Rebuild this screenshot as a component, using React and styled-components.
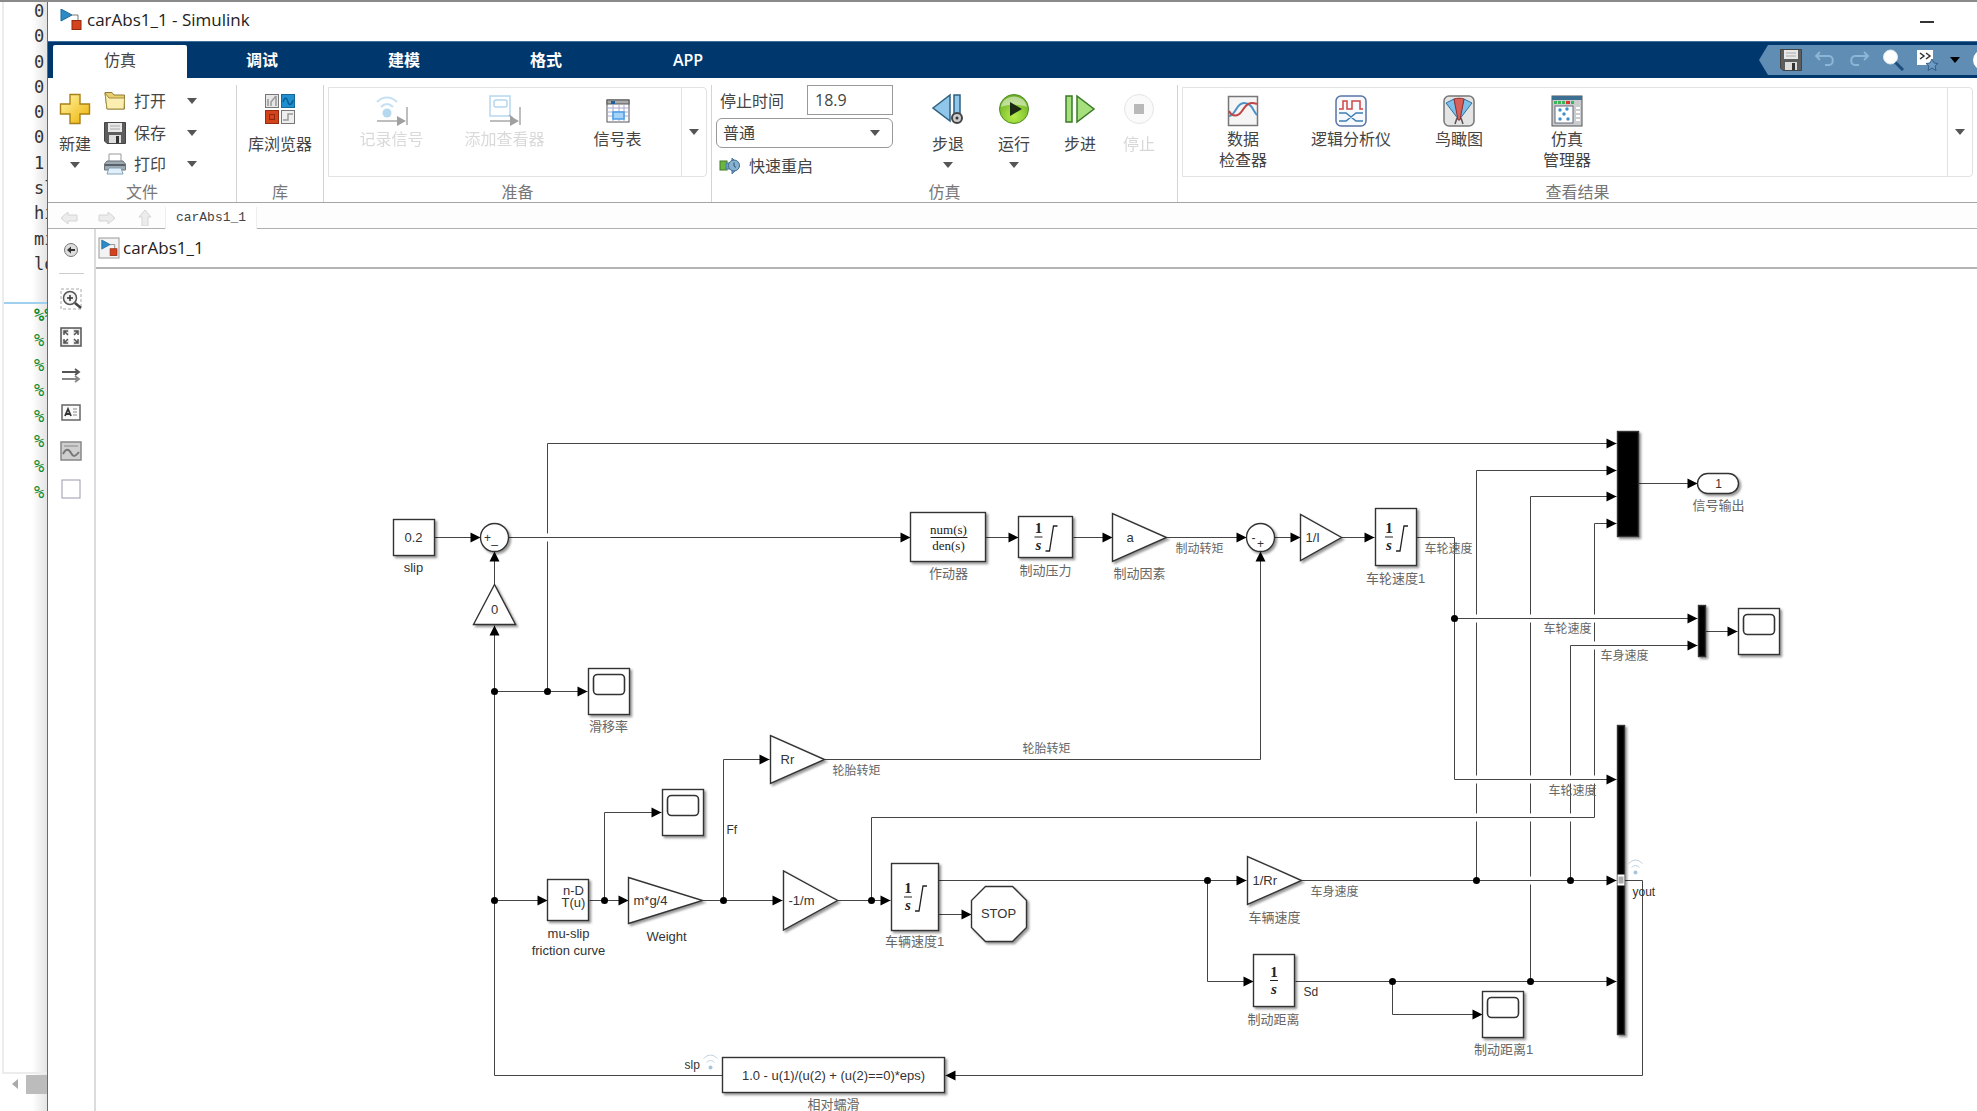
import React from 'react';
import styled, { createGlobalStyle } from 'styled-components';

const GlobalStyle = createGlobalStyle`
    * {
        box-sizing: border-box;
    }

    body {
        margin: 0;
        background: #fff;
        color: #444;
        font-family: "Open Sans", "Noto Sans", "Noto Sans CJK SC", sans-serif;
        font-size: 16px;
        overflow: hidden;
    }

    button, input, select {
        font: inherit;
        color: inherit;
    }
`;

/* ---------- shell ---------- */

const Screen = styled.div`
    display: grid;
    grid-template-columns: 47px minmax(0, 1fr);
    height: 100vh;
    border-top: 2px solid #8a8a8a;
    overflow: hidden;
`;

const Editor = styled.aside`
    display: flex;
    flex-direction: column;
    overflow: hidden;
    background: linear-gradient(to right, #fff 32px, #e4e4e4);
`;

const Page = styled.div`
    flex: 1;
    min-height: 0;
    margin-left: 2px;
    border-left: 2px solid #ececec;
    border-bottom: 2px solid #ececec;
`;

const Code = styled.div`
    display: grid;
    grid-auto-rows: 1fr;
    height: 506px;
    margin-top: -2px;
    font-family: "DejaVu Sans Mono", monospace;
    font-size: 17px;
    line-height: 22px;
`;

const CodeLine = styled.div`
    padding-left: 30px;
    white-space: pre;
    color: ${props => (props.$comment ? '#128a2e' : '#333')};
    font-weight: ${props => (props.$bold ? 700 : 400)};
    border-bottom: ${props => (props.$ruled ? '2px solid #9fd0f0' : 'none')};
`;

const ScrollRow = styled.div`
    display: flex;
    align-items: center;
    height: 20px;
    padding-left: 9px;
    gap: 7px;
`;

const Thumb = styled.div`
    flex: 1;
    height: 19px;
    background: #bcbcbc;
`;

const EditorFoot = styled.div`
    height: 17px;
`;

const Window = styled.main`
    display: flex;
    flex-direction: column;
    min-width: 0;
    background: #fff;
    border-left: 1px solid #6a6a6a;
`;

const TitleBar = styled.header`
    display: flex;
    align-items: center;
    height: 39px;
    flex: none;
    padding: 0 43px 4px 12px;
    gap: 5px;
`;

const Title = styled.h1`
    flex: 1;
    margin: 0;
    font-size: 17px;
    font-weight: 400;
    line-height: 24px;
    color: #222;
`;

const PlainButton = styled.button`
    display: flex;
    align-items: center;
    justify-content: center;
    padding: 0;
    border: 0;
    background: none;
    cursor: pointer;

    &:disabled {
        cursor: default;
    }
`;

/* ---------- ribbon ---------- */

const TabBar = styled.nav`
    display: flex;
    flex: none;
    height: 37px;
    padding: 3px 0 0 5px;
    gap: 8px;
    background: #00386e;
    border-top: 1px solid #3f6f9c;
`;

const Tab = styled.button`
    width: 134px;
    padding: 0 0 4px;
    border: 0;
    border-radius: 2px 2px 0 0;
    font-size: 16px;
    line-height: 24px;
    color: ${props => (props.$active ? '#444' : '#fff')};
    background: ${props => (props.$active ? '#fff' : 'transparent')};
    font-weight: ${props => (props.$active ? 400 : 600)};
`;

const QuickAccess = styled.div`
    display: flex;
    align-items: center;
    width: 218px;
    height: 30px;
    margin-left: auto;
    padding-left: 21px;
    gap: 12px;
    background: #5f8db4;
    overflow: hidden;
    clip-path: polygon(9px 0, 100% 0, 100% 100%, 9px 100%, 0 50%);

    button {
        flex: none;
    }
`;

const ToolStrip = styled.div`
    display: flex;
    flex: none;
    height: 125px;
    padding-top: 7px;
    border-bottom: 1px solid #a4a4a4;
`;

const Section = styled.section`
    display: flex;
    flex-direction: column;
    flex: ${props => (props.$width ? `0 0 ${props.$width}px` : '1')};
    min-width: 0;
    border-right: ${props => (props.$width ? '1px solid #d4d4d4' : 'none')};
`;

const SectionBody = styled.div`
    display: flex;
    height: 95px;
    padding: 0 4px;
    justify-content: ${props => (props.$center ? 'center' : 'flex-start')};
`;

const SectionName = styled.div`
    height: 22px;
    line-height: 24px;
    text-align: center;
    color: #777;
`;

const BigButton = styled.button`
    display: flex;
    flex-direction: column;
    align-items: center;
    width: ${props => props.$width}px;
    padding: 8px 0 0;
    border: 0;
    background: none;
    line-height: 24px;
    white-space: nowrap;
    opacity: ${props => (props.disabled ? 0.45 : 1)};
    color: ${props => (props.disabled ? '#a8a8a8' : '#444')};

    > span {
        margin: 7px 0 6px;
    }
`;

const FileRows = styled.div`
    display: flex;
    flex-direction: column;
    padding-left: 6px;
`;

const FileRow = styled.div`
    display: flex;
    align-items: center;
    height: 32px;
    gap: 21px;
`;

const IconTextButton = styled(PlainButton)`
    gap: 8px;
    line-height: 24px;
`;

const Gallery = styled.div`
    display: flex;
    flex: 1;
    height: 90px;
    margin-top: 2px;
    border: 1px solid #e2e2e2;
    border-radius: 0 4px 4px 0;
`;

const GalleryItems = styled.div`
    display: flex;
    flex: 1;
    padding-left: 6px;
`;

const GalleryItem = styled.button`
    display: flex;
    flex-direction: column;
    align-items: center;
    width: ${props => props.$width}px;
    padding: 7px 0 0;
    gap: 2px;
    border: 0;
    background: none;
    line-height: 21px;
    white-space: pre;
    opacity: ${props => (props.disabled ? 0.5 : 1)};
    color: ${props => (props.disabled ? '#b4b4b4' : '#444')};
`;

const GalleryMore = styled(PlainButton)`
    width: 25px;
    border-left: 1px solid #e2e2e2;
`;

const SimSettings = styled.div`
    display: flex;
    flex-direction: column;
    width: 177px;
    margin-right: 22px;
    gap: 3px;
`;

const StopTime = styled.label`
    display: flex;
    align-items: center;
    justify-content: space-between;
    height: 30px;
    padding-left: 4px;
`;

const TimeInput = styled.input`
    width: 86px;
    height: 30px;
    padding: 0 7px;
    border: 1px solid #999;
    background: #fff;
`;

const ModeBox = styled.div`
    position: relative;
    height: 30px;

    > svg {
        position: absolute;
        right: 13px;
        top: 12px;
        pointer-events: none;
    }
`;

const ModeSelect = styled.select`
    width: 100%;
    height: 30px;
    padding: 0 6px;
    appearance: none;
    border: 1px solid #999;
    border-radius: 6px;
    background: #fff;
`;

const FastRestart = styled(IconTextButton)`
    height: 30px;
    padding-left: 3px;
    justify-content: flex-start;
`;

/* ---------- explorer bar, palette, canvas ---------- */

const NavBar = styled.div`
    display: flex;
    flex: none;
    align-items: center;
    height: 26px;
    padding: 4px 0 0 12px;
    gap: 20px;
    background: #fdfdfd;
    border-bottom: 1px solid #b0b0b0;
`;

const NavTab = styled.button`
    height: 22px;
    margin-left: -9px;
    width: 92px;
    padding: 0;
    border: 0;
    border-left: 1px solid #eee;
    border-right: 1px solid #eee;
    background: #fff;
    font-family: "Liberation Mono", monospace;
    font-size: 13px;
`;

const Workspace = styled.div`
    display: flex;
    flex: 1;
    min-height: 0;
`;

const Palette = styled.div`
    display: flex;
    flex-direction: column;
    align-items: center;
    flex: none;
    width: 48px;
    padding-top: 12px;
    border-right: 2px solid #dcdcdc;
`;

const PaletteRule = styled.hr`
    width: 25px;
    height: 1px;
    margin: 14px 0 6px;
    border: 0;
    background: #ccc;
`;

const PaletteButton = styled(PlainButton)`
    width: 26px;
    height: ${props => (props.$small ? 18 : 38)}px;
`;

const Model = styled.div`
    display: flex;
    flex-direction: column;
    flex: 1;
    min-width: 0;
`;

const Breadcrumb = styled.div`
    display: flex;
    flex: none;
    align-items: center;
    height: 40px;
    padding-left: 2px;
    gap: 3px;
    border-bottom: 2px solid #b4b4b4;
    font-size: 17px;
    line-height: 24px;
    color: #222;
`;

const Canvas = styled.div`
    flex: 1;
    min-height: 0;
    overflow: hidden;
`;

const Diagram = styled.svg`
    display: block;
    width: 100%;
    height: 100%;
`;

const Line = styled.polyline`
    fill: none;
    stroke: #444;
    stroke-width: 1;
`;

const Shape = styled.g`
    fill: #fff;
    stroke: #333;
    stroke-width: 1.4;
    filter: drop-shadow(2px 2px 1px rgba(0, 0, 0, 0.4));
`;

const BlockText = styled.text`
    font-family: "Liberation Sans", "Noto Sans CJK SC", sans-serif;
    font-size: ${props => props.$size || 13}px;
    fill: ${props => props.$tone || '#333'};
    text-anchor: ${props => props.$anchor || 'middle'};
`;

const MathText = styled.text`
    font-family: "Liberation Serif", serif;
    font-size: ${props => props.$size || 15}px;
    font-style: ${props => (props.$italic ? 'italic' : 'normal')};
    font-weight: ${props => (props.$bold ? 700 : 400)};
    fill: #222;
    text-anchor: middle;
`;

/* ---------- icons ---------- */

const Caret = ({ color = '#555' }) => (
    <svg width="10" height="6" viewBox="0 0 10 6"><path d="M0 0h10L5 6z" fill={color} /></svg>
);

const ModelIcon = ({ framed }) => (
    <svg width="22" height="22" viewBox="0 0 22 22">
        {framed && <rect x="1" y="1" width="20" height="20" fill="#f3f3f3" stroke="#999" />}
        <g transform={framed ? 'translate(3 3) scale(.76)' : undefined}>
            <path d="M12 6h6v7" fill="none" stroke="#777" />
            <path d="M1 0v12l11-6z" fill="#2c8bc4" stroke="#1c6c9f" />
            <rect x="12" y="11.500" width="9" height="9" fill="#d5431d" stroke="#8d2a10" />
        </g>
    </svg>
);

const PlusIcon = () => (
    <svg width="32" height="32" viewBox="0 0 32 32">
        <defs>
            <linearGradient id="gold" x1="0" y1="0" x2="1" y2="1">
                <stop offset="0" stopColor="#fff6a8" />
                <stop offset="1" stopColor="#eeb000" />
            </linearGradient>
        </defs>
        <path d="M11 1.500h10v9.500h9.500v10H21v9.500H11V21H1.500V11H11z" fill="url(#gold)" stroke="#a98116" strokeWidth="1.400" />
    </svg>
);

const FolderIcon = () => (
    <svg width="22" height="22" viewBox="0 0 22 22">
        <path d="M1 2.500h7l2 2.500h10.500v14H3z" fill="#e9cf6b" stroke="#8e7a35" />
        <path d="M1 3l4 5h15.500l-.5 11H3z" fill="#fbeeb0" stroke="#a28d46" />
    </svg>
);

const DiskIcon = () => (
    <svg width="22" height="22" viewBox="0 0 22 22">
        <path d="M.5.500h21v21H3l-2.500-2.500z" fill="#5d5d5d" stroke="#444" />
        <rect x="4" y="1" width="14" height="9" fill="#e8e8e8" />
        <path d="M6 4h10M6 7h10" stroke="#aaa" />
        <rect x="5" y="13" width="12" height="8" fill="#ddd" />
        <rect x="12" y="14" width="3" height="7" fill="#333" />
    </svg>
);

const PrinterIcon = () => (
    <svg width="22" height="22" viewBox="0 0 22 22">
        <path d="M5 1h12v8H5z" fill="#fff" stroke="#999" />
        <path d="M3 8h16l2.500 3v6H.5v-6z" fill="#9fa9b1" stroke="#6c757c" />
        <path d="M1 12h20" stroke="#59626a" strokeWidth="2" />
        <path d="M5 15h12l2 6H3z" fill="#dff0fa" stroke="#84a2b5" />
    </svg>
);

const LibraryIcon = () => (
    <svg width="32" height="32" viewBox="0 0 32 32">
        <rect x="1.500" y="1.500" width="13" height="13" fill="#e6e6e6" stroke="#777" />
        <path d="M4 13V6M7 13V9l5-6M12 3v10" fill="none" stroke="#999" strokeWidth="1.500" />
        <rect x="17.500" y="1.500" width="13" height="13" fill="#1f8fce" stroke="#14699a" />
        <path d="M19 9c2-6 4-4 5 0s4 3 5-2" fill="none" stroke="#0b5f97" strokeWidth="1.500" />
        <rect x="1.500" y="17.500" width="13" height="13" fill="#d5431d" stroke="#962c10" />
        <rect x="5.500" y="21.500" width="5" height="5" fill="none" stroke="#8d2a10" />
        <rect x="17.500" y="17.500" width="13" height="13" fill="#eee" stroke="#777" />
        <path d="M19 27h5v-6h5" fill="none" stroke="#999" strokeWidth="1.500" />
    </svg>
);

const LogSignalIcon = () => (
    <svg width="32" height="32" viewBox="0 0 32 32">
        <path d="M1 7c6-6 14-6 20 0M5 12c4-4 8-4 12 0" fill="none" stroke="#8cc3e8" strokeWidth="2" />
        <circle cx="11" cy="18" r="4.500" fill="#6fb2e0" />
        <path d="M1 26h22M31 12v18" stroke="#555" strokeWidth="1.500" />
        <path d="M21 21v10l9-5z" fill="#444" />
    </svg>
);

const AddViewerIcon = () => (
    <svg width="32" height="32" viewBox="0 0 32 32">
        <rect x="1" y="1" width="20" height="20" fill="#fff" stroke="#6fb2e0" strokeWidth="1.500" />
        <rect x="5" y="5" width="13" height="7" rx="2" fill="#fff" stroke="#6fb2e0" strokeWidth="1.500" />
        <path d="M1 26h22M31 12v18M20 20l4 3" stroke="#555" strokeWidth="1.500" />
        <path d="M21 21v10l9-5z" fill="#444" />
    </svg>
);

const SignalTableIcon = () => (
    <svg width="32" height="32" viewBox="0 0 32 32">
        <rect x="5" y="5" width="22" height="22" fill="#fff" stroke="#555" />
        <rect x="5" y="5" width="22" height="4" fill="#aaa" stroke="#555" />
        <rect x="9" y="6" width="4" height="3" fill="#1f5f9e" />
        <path d="M5 13h22M5 17h22M5 21h22M11 9v18M17 9v18M22 9v18" stroke="#aac" />
        <rect x="11" y="17" width="11" height="7" fill="#a5d3fa" stroke="#489ee8" strokeWidth="1.500" />
    </svg>
);

const StepBackIcon = () => (
    <svg width="32" height="32" viewBox="0 0 32 32">
        <path d="M1 15L18 2v26z" fill="#8fc6ea" stroke="#2f5f80" strokeWidth="1.500" />
        <rect x="22" y="2" width="6" height="24" fill="#8fc6ea" stroke="#2f5f80" strokeWidth="1.500" />
        <circle cx="25" cy="25" r="5" fill="#ccc" stroke="#444" strokeWidth="2" />
        <circle cx="25" cy="25" r="1.500" fill="#333" />
    </svg>
);

const RunIcon = () => (
    <svg width="32" height="32" viewBox="0 0 32 32">
        <defs>
            <radialGradient id="run" cx=".5" cy=".75" r=".7">
                <stop offset="0" stopColor="#b6ee4a" />
                <stop offset="1" stopColor="#6cae28" />
            </radialGradient>
        </defs>
        <circle cx="16" cy="16" r="14.500" fill="url(#run)" stroke="#4f8f22" />
        <path d="M3 14C5 0 27 0 29 14c-8-3-18-3-26 0z" fill="#fff" opacity=".5" />
        <path d="M12 9v14l12-7z" fill="#1c2a12" />
    </svg>
);

const StepIcon = () => (
    <svg width="32" height="32" viewBox="0 0 32 32">
        <rect x="2" y="3" width="6" height="26" fill="#a5e07c" stroke="#3b7a28" strokeWidth="1.500" />
        <path d="M13 3v26l17-13z" fill="#a5e07c" stroke="#3b7a28" strokeWidth="1.500" />
    </svg>
);

const StopIcon = () => (
    <svg width="32" height="32" viewBox="0 0 32 32">
        <circle cx="16" cy="16" r="14.500" fill="#f6f6f6" stroke="#c4c4c4" />
        <rect x="11" y="11" width="10" height="10" fill="#666" />
    </svg>
);

const RestartIcon = () => (
    <svg width="22" height="18" viewBox="0 0 22 18">
        <rect x="1" y="4" width="7" height="9" fill="#6cb544" stroke="#3d7a24" />
        <path d="M7 6h6V1l8 8-8 8v-5H7z" fill="#6c9fc4" stroke="#4b7a9b" />
        <circle cx="15" cy="8.500" r="5.500" fill="#86b1d1" stroke="#426f8f" />
        <path d="M15 5.500v3.500l2 1.500" fill="none" stroke="#2d5270" />
    </svg>
);

const InspectorIcon = () => (
    <svg width="32" height="32" viewBox="0 0 32 32">
        <rect x="1.500" y="1.500" width="29" height="29" fill="#f5f5f5" stroke="#777" strokeWidth="1.500" />
        <path d="M2 21C9 20 9 8 17 8s9 8 13 12" fill="none" stroke="#4a93c8" strokeWidth="2" />
        <path d="M2 16c3 6 9 6 13 0s7-10 15-7" fill="none" stroke="#c04545" strokeWidth="2" />
    </svg>
);

const LogicIcon = () => (
    <svg width="32" height="32" viewBox="0 0 32 32">
        <rect x="1" y="1" width="30" height="30" rx="5" fill="#f6f9fd" stroke="#5873a8" strokeWidth="1.500" />
        <path d="M4 14h4V6h4v8h5V6h8v8h3" fill="none" stroke="#cf4646" strokeWidth="1.500" />
        <path d="M4 18h7l10 8h7M4 26h7l10-8h7" fill="none" stroke="#3f7fb5" strokeWidth="1.500" />
    </svg>
);

const BirdIcon = () => (
    <svg width="32" height="32" viewBox="0 0 32 32">
        <rect x="1" y="1" width="30" height="30" rx="5" fill="#e4e4e4" stroke="#777" strokeWidth="1.500" />
        <path d="M3 8l8-4 5 21zM29 8l-8-4-5 21z" fill="#7cc0ea" stroke="#2d6e9e" />
        <path d="M11 4c3-1 7-1 10 0l-4 21h-2z" fill="#d8605a" stroke="#8e2f2b" />
        <path d="M14 23l-2 6M18 23l2 6" stroke="#555" strokeWidth="1.500" />
    </svg>
);

const ManagerIcon = () => (
    <svg width="32" height="32" viewBox="0 0 32 32">
        <rect x="1" y="1" width="30" height="30" fill="#c9cdd0" stroke="#555" />
        <rect x="1" y="1" width="30" height="4" fill="#3d6f92" />
        <path d="M3 7.500h12M20 7.500h3" stroke="#3db35b" strokeWidth="3" strokeDasharray="3 1" />
        <path d="M15 7.500h4" stroke="#d33" strokeWidth="3" />
        <rect x="4" y="11" width="18" height="17" fill="#fff" stroke="#667" />
        <g fill="#3b8fce">
            <circle cx="9" cy="15" r="1.700" /><circle cx="16" cy="14" r="1.700" /><circle cx="13" cy="19" r="1.700" />
            <circle cx="9" cy="24" r="1.700" /><circle cx="17" cy="24" r="1.700" />
        </g>
        <path d="M25 13h4M25 17h4M25 21h4M25 25h4" stroke="#fff" strokeWidth="2" />
    </svg>
);

const TurnIcon = ({ flip }) => (
    <svg width="22" height="22" viewBox="0 0 22 22">
        <g transform={flip ? 'matrix(-1 0 0 1 22 0)' : undefined} fill="none" stroke="#8db5d6" strokeWidth="2">
            <path d="M3 7h12c5 0 5 9 0 9h-4" />
            <path d="M6 3L2 7l4 4" />
        </g>
    </svg>
);

const LensIcon = () => (
    <svg width="22" height="22" viewBox="0 0 22 22">
        <path d="M13 13l8 8" stroke="#1d4d7d" strokeWidth="3" />
        <circle cx="8.500" cy="8" r="7" fill="#fff" stroke="#dbe8f3" />
    </svg>
);

const ShortcutIcon = () => (
    <svg width="22" height="22" viewBox="0 0 22 22">
        <rect x="1" y="1" width="16" height="15" fill="#fff" />
        <path d="M4 4l4 3-4 3M10 4l4 3-4 3" fill="none" stroke="#333" strokeWidth="1.500" />
        <path d="M16 10l2 4 4 .5-3 2.500 1 4.500-4-2.500-4 2.500 1-4.500-3-2.500 4-.5z" fill="#6f9cc6" stroke="#335f88" />
    </svg>
);

const HelpIcon = () => (
    <svg width="22" height="22" viewBox="0 0 22 22"><circle cx="11" cy="11" r="10" fill="#fff" /></svg>
);

const NavArrow = ({ angle = 0 }) => (
    <svg width="18" height="16" viewBox="0 0 18 16">
        <path
            transform={`rotate(${angle} 9 8)`}
            d="M1 8l7-6v3h9v6H8v3z"
            fill="#ececec"
            stroke="#d4d4d4"
        />
    </svg>
);

const CollapseIcon = () => (
    <svg width="16" height="16" viewBox="0 0 16 16">
        <circle cx="8" cy="8" r="6.500" fill="#ddd" stroke="#777" />
        <path d="M12 7H8V4.500L4 8l4 3.500V9h4z" fill="#333" />
    </svg>
);

const ZoomIcon = () => (
    <svg width="22" height="22" viewBox="0 0 22 22" fill="none">
        <rect x="1" y="1" width="20" height="20" stroke="#aaa" strokeDasharray="3 2" />
        <circle cx="10" cy="10" r="6.500" fill="#f2f2f2" stroke="#555" strokeWidth="1.500" />
        <path d="M7 10h6M10 7v6" stroke="#333" strokeWidth="1.500" />
        <path d="M15 15l6 5" stroke="#444" strokeWidth="2.500" />
    </svg>
);

const FitIcon = () => (
    <svg width="22" height="20" viewBox="0 0 22 20" fill="none">
        <rect x="1" y="1" width="20" height="18" fill="#e6e6e6" stroke="#555" strokeWidth="1.500" />
        <path d="M9 2h4v5h7v6h-7v5H9v-5H2V7h7z" fill="#fff" />
        <path d="M4 8V4h4M14 4h4v4M18 12v4h-4M8 16H4v-4M4 4l4 4M18 4l-4 4M18 16l-4-4M4 16l4-4" stroke="#555" strokeWidth="1.500" />
    </svg>
);

const ArrowsIcon = () => (
    <svg width="22" height="16" viewBox="0 0 22 16" fill="none">
        <path d="M2 5h17M15 2l4 3-4 3" stroke="#555" strokeWidth="1.800" />
        <path d="M2 12h17M15 9l4 3-4 3" stroke="#888" strokeWidth="1.800" />
    </svg>
);

const NoteIcon = () => (
    <svg width="20" height="18" viewBox="0 0 20 18" fill="none">
        <rect x="1" y="1" width="18" height="15" fill="#fafafa" stroke="#666" strokeWidth="1.500" />
        <path d="M4 12l3-7 3 7M5 10h4" stroke="#333" strokeWidth="1.800" />
        <path d="M12 5h4M12 8h4M12 11h4" stroke="#888" />
    </svg>
);

const ImageIcon = () => (
    <svg width="22" height="20" viewBox="0 0 22 20" fill="none">
        <rect x="1" y="1" width="20" height="18" fill="#cfcfcf" stroke="#888" strokeWidth="1.500" />
        <path d="M4 5h14" stroke="#888" />
        <path d="M3 13c3-6 6-5 8-1s4 4 8-1" stroke="#777" strokeWidth="2" />
    </svg>
);

const AreaIcon = () => (
    <svg width="20" height="20" viewBox="0 0 20 20"><rect x="1" y="1" width="18" height="18" fill="#fff" stroke="#9a9ab0" /></svg>
);

/* ---------- diagram parts ---------- */

const heads = {
    right: (x, y) => `M${x} ${y}l-10 -5v10z`,
    left: (x, y) => `M${x} ${y}l10 -5v10z`,
    up: (x, y) => `M${x} ${y}l-5 10h10z`,
};

// the arrow head sits on the last point of the wire
const Wire = ({ points, head }) => {
    const [x, y] = points[points.length - 1];
    return (
        <g>
            <Line points={points.map(p => p.join(',')).join(' ')} />
            {head && <path d={heads[head](x, y)} fill="#000" />}
        </g>
    );
};

// gap in a vertical wire where a horizontal one crosses it
const Crossing = ({ x, y }) => (
    <g>
        <rect x={x - 1} y={y - 4} width="2" height="8" fill="#fff" />
        <Line points={`${x - 2},${y} ${x + 2},${y}`} />
    </g>
);

// chinese captions are drawn lighter than latin ones
const toneOf = text => (/^[\x20-\x7e]+$/.test(text) ? '#333' : '#666');

const Label = ({ x, y, text }) => <BlockText x={x} y={y + 4} $tone={toneOf(text)}>{text}</BlockText>;

const SignalLabel = ({ x, y, text }) => (
    <BlockText x={x} y={y + 4} $size={12} $tone={toneOf(text)} $anchor="start">{text}</BlockText>
);

const Box = ({ x, y, w, h, rx = 0 }) => (
    <Shape><rect x={x} y={y} width={w} height={h} rx={rx} /></Shape>
);

const Gain = ({ x, y, w, h, text, indent = 5 }) => (
    <g>
        <Shape><path d={`M${x} ${y - h / 2}v${h}l${w} ${-h / 2}z`} /></Shape>
        <BlockText x={x + indent} y={y + 4} $anchor="start">{text}</BlockText>
    </g>
);

const Scope = ({ x, y }) => (
    <g>
        <Box x={x} y={y} w={41} h={46} />
        <rect x={x + 5} y={y + 6} width="31" height="20" rx="4" fill="#fff" stroke="#333" strokeWidth="1.600" />
    </g>
);

const Integrator = ({ x, y, w, h, limited }) => {
    const cx = x + w / 2 - (limited ? 7 : 0);
    const cy = y + h / 2;
    return (
        <g>
            <Box x={x} y={y} w={w} h={h} />
            <MathText x={cx} y={cy - 4} $bold>1</MathText>
            <path d={`M${cx - 4} ${cy}h8`} stroke="#222" />
            <MathText x={cx} y={cy + 13} $italic $bold>s</MathText>
            {limited && <path d={`M${cx + 7} ${cy + 14}h4l4 -25h4`} fill="none" stroke="#222" strokeWidth="1.300" />}
        </g>
    );
};

const Sum = ({ x, y, left, bottom }) => (
    <g>
        <Shape><circle cx={x} cy={y} r="14" /></Shape>
        <BlockText x={x - 7} y={y + 4} $size={12}>{left}</BlockText>
        <BlockText x={x} y={y + (bottom === '+' ? 10 : 5)} $size={12}>{bottom}</BlockText>
    </g>
);

const SolidBar = styled.rect`
    fill: #000;
`;

const Mux = ({ x, y, w, h }) => (
    <Shape><SolidBar x={x} y={y} width={w} height={h} /></Shape>
);

const LogBadge = ({ x, y }) => (
    <g fill="none" stroke="#c2d3df">
        <path d={`M${x - 7} ${y - 4}q7 -7 14 0M${x - 4} ${y}q4 -4 8 0`} />
        <circle cx={x} cy={y + 5} r="2" fill="#a9c4d8" stroke="none" />
    </g>
);

const wires = [
    { points: [[435, 537], [481, 537]], head: 'right' },
    { points: [[509, 537], [911, 537]], head: 'right' },
    { points: [[986, 537], [1019, 537]], head: 'right' },
    { points: [[1074, 537], [1113, 537]], head: 'right' },
    { points: [[1167, 537], [1247, 537]], head: 'right' },
    { points: [[1275, 537], [1301, 537]], head: 'right' },
    { points: [[1342, 537], [1375, 537]], head: 'right' },
    { points: [[495, 584], [495, 551]], head: 'up' },
    { points: [[723, 1075], [495, 1075], [495, 625]], head: 'up' },
    { points: [[495, 691], [588, 691]], head: 'right' },
    { points: [[548, 691], [548, 443], [1617, 443]], head: 'right' },
    { points: [[495, 900], [548, 900]], head: 'right' },
    { points: [[590, 900], [629, 900]], head: 'right' },
    { points: [[605, 900], [605, 812], [662, 812]], head: 'right' },
    { points: [[703, 900], [783, 900]], head: 'right' },
    { points: [[724, 900], [724, 759], [770, 759]], head: 'right' },
    { points: [[824, 759], [1261, 759], [1261, 551]], head: 'up' },
    { points: [[838, 900], [891, 900]], head: 'right' },
    { points: [[872, 900], [872, 817], [1595, 817], [1595, 523], [1617, 523]], head: 'right' },
    { points: [[939, 914], [972, 914]], head: 'right' },
    { points: [[939, 880], [1247, 880]], head: 'right' },
    { points: [[1208, 880], [1208, 981], [1254, 981]], head: 'right' },
    { points: [[1302, 880], [1617, 880]], head: 'right' },
    { points: [[1477, 880], [1477, 470], [1617, 470]], head: 'right' },
    { points: [[1571, 880], [1571, 645], [1698, 645]], head: 'right' },
    { points: [[1296, 981], [1617, 981]], head: 'right' },
    { points: [[1531, 981], [1531, 496], [1617, 496]], head: 'right' },
    { points: [[1393, 981], [1393, 1014], [1483, 1014]], head: 'right' },
    { points: [[1416, 537], [1455, 537], [1455, 779], [1617, 779]], head: 'right' },
    { points: [[1455, 618], [1698, 618]], head: 'right' },
    { points: [[1639, 483], [1698, 483]], head: 'right' },
    { points: [[1706, 631], [1738, 631]], head: 'right' },
    { points: [[1625, 880], [1643, 880], [1643, 1075], [946, 1075]], head: 'left' },
];

const crossings = [
    [548, 537], [1477, 618], [1531, 618], [1595, 618], [1595, 645],
    [1477, 779], [1531, 779], [1571, 779], [1595, 779],
    [1477, 817], [1531, 817], [1571, 817], [1531, 880],
];

const joints = [
    [495, 691], [548, 691], [495, 900], [605, 900], [724, 900], [872, 900], [1208, 880],
    [1477, 880], [1571, 880], [1393, 981], [1531, 981], [1455, 618],
];

const labels = [
    [414, 567, 'slip'], [609, 726, '滑移率'], [949, 573, '作动器'], [1046, 570, '制动压力'],
    [1140, 573, '制动因素'], [1396, 578, '车轮速度1'], [1719, 505, '信号输出'], [569, 933, 'mu-slip'],
    [569, 950, 'friction curve'], [667, 936, 'Weight'], [915, 941, '车辆速度1'], [1275, 917, '车辆速度'],
    [1274, 1019, '制动距离'], [1504, 1049, '制动距离1'], [834, 1104, '相对蠕滑'],
];

const signals = [
    [1176, 548, '制动转矩'], [1425, 548, '车轮速度'], [833, 770, '轮胎转矩'], [1023, 748, '轮胎转矩'],
    [1544, 628, '车轮速度'], [1601, 655, '车身速度'], [1549, 790, '车轮速度'], [1311, 891, '车身速度'],
    [727, 829, 'Ff'], [1304, 991, 'Sd'], [685, 1064, 'slp'], [1633, 891, 'yout'],
];

const BrakeModel = () => (
    <Diagram role="img" aria-label="carAbs1_1">
        <g transform="translate(-96.5 -268.5)">
            {wires.map((wire, i) => <Wire key={i} {...wire} />)}
            {crossings.map(([x, y]) => <Crossing key={`${x}-${y}`} x={x} y={y} />)}
            {joints.map(([x, y]) => <circle key={`${x}-${y}`} cx={x} cy={y} r="3.500" fill="#000" />)}

            <Box x={394} y={519} w={41} h={36} />
            <BlockText x={414} y={541}>0.2</BlockText>
            <Sum x={495} y={537} left="+" bottom="_" />
            <Shape><path d="M495 584L474 624H516z" /></Shape>
            <BlockText x={495} y={613}>0</BlockText>

            <Box x={911} y={512} w={75} h={49} />
            <MathText x={949} y={533} $size={13}>num(s)</MathText>
            <path d="M931 537h37" stroke="#222" />
            <MathText x={949} y={549} $size={13}>den(s)</MathText>
            <Integrator x={1019} y={516} w={54} h={41} limited />
            <Gain x={1113} y={537} w={54} h={48} text="a" indent={14} />
            <Sum x={1261} y={537} left="-" bottom="+" />
            <Gain x={1301} y={537} w={41} h={46} text="1/I" />
            <Integrator x={1376} y={508} w={41} h={57} limited />

            <Scope x={589} y={668} />
            <Scope x={663} y={789} />
            <Scope x={1739} y={608} />
            <Scope x={1483} y={991} />

            <Gain x={771} y={759} w={54} h={48} text="Rr" indent={10} />
            <Box x={548} y={879} w={41} h={41} />
            <BlockText x={574} y={894}>n-D</BlockText>
            <BlockText x={574} y={906}>T(u)</BlockText>
            <Gain x={629} y={900} w={74} h={46} text="m*g/4" />
            <Gain x={784} y={900} w={54} h={59} text="-1/m" />
            <Integrator x={892} y={863} w={47} h={67} limited />
            <Shape><path d="M986 886h27l14 14v27l-14 14h-27l-14 -14v-27z" /></Shape>
            <BlockText x={999} y={917}>STOP</BlockText>

            <Gain x={1248} y={880} w={54} h={48} text="1/Rr" />
            <Integrator x={1254} y={954} w={41} h={52} />

            <Mux x={1618} y={431} w={21} h={105} />
            <Mux x={1699} y={605} w={7} h={51} />
            <Mux x={1618} y={725} w={7} h={309} />
            <rect x="1618" y="874" width="7" height="11" fill="#fff" />
            <rect x="1619" y="876" width="5" height="7" fill="#aaa" />
            <Box x={1698} y={473} w={41} h={20} rx={10} />
            <BlockText x={1719} y={487} $size={12}>1</BlockText>

            <Box x={723} y={1057} w={222} h={35} />
            <BlockText x={834} y={1079}>1.0 - u(1)/(u(2) + (u(2)==0)*eps)</BlockText>

            <LogBadge x={711} y={1062} />
            <LogBadge x={1636} y={867} />

            {labels.map(([x, y, text]) => <Label key={`${x}-${y}`} x={x} y={y} text={text} />)}
            {signals.map(([x, y, text]) => <SignalLabel key={`${x}-${y}`} x={x} y={y} text={text} />)}
        </g>
    </Diagram>
);

/* ---------- page ---------- */

const codeLines = ['0', '0', '0', '0', '0', '0', '1', 'sl', 'hi', 'mi', 'lo', '', '%%', '%', '%', '%', '%', '%', '%', '%'];

const tabs = ['仿真', '调试', '建模', '格式', 'APP'];

const fileActions = [
    { text: '打开', icon: <FolderIcon /> },
    { text: '保存', icon: <DiskIcon /> },
    { text: '打印', icon: <PrinterIcon /> },
];

const prepareItems = [
    { text: '记录信号', icon: <LogSignalIcon />, disabled: true },
    { text: '添加查看器', icon: <AddViewerIcon />, disabled: true },
    { text: '信号表', icon: <SignalTableIcon /> },
];

const resultItems = [
    { text: '数据\n检查器', icon: <InspectorIcon /> },
    { text: '逻辑分析仪', icon: <LogicIcon /> },
    { text: '鸟瞰图', icon: <BirdIcon /> },
    { text: '仿真\n管理器', icon: <ManagerIcon /> },
];

const ItemGallery = ({ items, itemWidth }) => (
    <Gallery>
        <GalleryItems>
            {items.map(item => (
                <GalleryItem key={item.text} $width={itemWidth} disabled={item.disabled}>
                    {item.icon}
                    {item.text}
                </GalleryItem>
            ))}
        </GalleryItems>
        <GalleryMore aria-label="更多"><Caret /></GalleryMore>
    </Gallery>
);

const App = () => {
    return (
        <>
            <GlobalStyle />
            <Screen>
                <Editor>
                    <Page>
                        <Code>
                            {codeLines.map((line, i) => (
                                <CodeLine key={i} $comment={line.startsWith('%')} $bold={line === '%%'} $ruled={line === ''}>
                                    {line}
                                </CodeLine>
                            ))}
                        </Code>
                    </Page>
                    <ScrollRow>
                        <svg width="10" height="10" viewBox="0 0 10 10"><path d="M9 0v10L3 5z" fill="#aaa" /></svg>
                        <Thumb />
                    </ScrollRow>
                    <EditorFoot />
                </Editor>

                <Window>
                    <TitleBar>
                        <ModelIcon />
                        <Title>carAbs1_1 - Simulink</Title>
                        <PlainButton aria-label="最小化">
                            <svg width="14" height="14" viewBox="0 0 14 14"><path d="M0 9h14" stroke="#333" strokeWidth="2" /></svg>
                        </PlainButton>
                    </TitleBar>

                    <TabBar>
                        {tabs.map((tab, i) => <Tab key={tab} $active={i === 0}>{tab}</Tab>)}
                        <QuickAccess>
                            <PlainButton aria-label="保存"><DiskIcon /></PlainButton>
                            <PlainButton aria-label="撤销"><TurnIcon /></PlainButton>
                            <PlainButton aria-label="重做"><TurnIcon flip /></PlainButton>
                            <PlainButton aria-label="查找"><LensIcon /></PlainButton>
                            <PlainButton aria-label="快捷方式"><ShortcutIcon /></PlainButton>
                            <PlainButton aria-label="更多"><Caret color="#000" /></PlainButton>
                            <PlainButton aria-label="帮助"><HelpIcon /></PlainButton>
                        </QuickAccess>
                    </TabBar>

                    <ToolStrip>
                        <Section $width={189}>
                            <SectionBody>
                                <BigButton $width={46}><PlusIcon /><span>新建</span><Caret /></BigButton>
                                <FileRows>
                                    {fileActions.map(action => (
                                        <FileRow key={action.text}>
                                            <IconTextButton>{action.icon}{action.text}</IconTextButton>
                                            <PlainButton aria-label={`${action.text}选项`}><Caret /></PlainButton>
                                        </FileRow>
                                    ))}
                                </FileRows>
                            </SectionBody>
                            <SectionName>文件</SectionName>
                        </Section>

                        <Section $width={87}>
                            <SectionBody $center>
                                <BigButton $width={66}><LibraryIcon /><span>库浏览器</span></BigButton>
                            </SectionBody>
                            <SectionName>库</SectionName>
                        </Section>

                        <Section $width={388}>
                            <SectionBody>
                                <ItemGallery items={prepareItems} itemWidth={113} />
                            </SectionBody>
                            <SectionName>准备</SectionName>
                        </Section>

                        <Section $width={466}>
                            <SectionBody>
                                <SimSettings>
                                    <StopTime>停止时间<TimeInput defaultValue="18.9" /></StopTime>
                                    <ModeBox>
                                        <ModeSelect aria-label="仿真模式"><option>普通</option></ModeSelect>
                                        <Caret />
                                    </ModeBox>
                                    <FastRestart><RestartIcon />快速重启</FastRestart>
                                </SimSettings>
                                <BigButton $width={66}><StepBackIcon /><span>步退</span><Caret /></BigButton>
                                <BigButton $width={66}><RunIcon /><span>运行</span><Caret /></BigButton>
                                <BigButton $width={66}><StepIcon /><span>步进</span></BigButton>
                                <BigButton $width={52} disabled><StopIcon /><span>停止</span></BigButton>
                            </SectionBody>
                            <SectionName>仿真</SectionName>
                        </Section>

                        <Section>
                            <SectionBody>
                                <ItemGallery items={resultItems} itemWidth={108} />
                            </SectionBody>
                            <SectionName>查看结果</SectionName>
                        </Section>
                    </ToolStrip>

                    <NavBar>
                        <PlainButton aria-label="后退" disabled><NavArrow /></PlainButton>
                        <PlainButton aria-label="前进" disabled><NavArrow angle={180} /></PlainButton>
                        <PlainButton aria-label="向上" disabled><NavArrow angle={90} /></PlainButton>
                        <NavTab>carAbs1_1</NavTab>
                    </NavBar>

                    <Workspace>
                        <Palette>
                            <PaletteButton $small aria-label="隐藏浏览器"><CollapseIcon /></PaletteButton>
                            <PaletteRule />
                            <PaletteButton aria-label="缩放"><ZoomIcon /></PaletteButton>
                            <PaletteButton aria-label="适应视图"><FitIcon /></PaletteButton>
                            <PaletteButton aria-label="信号线"><ArrowsIcon /></PaletteButton>
                            <PaletteButton aria-label="注释"><NoteIcon /></PaletteButton>
                            <PaletteButton aria-label="图像"><ImageIcon /></PaletteButton>
                            <PaletteButton aria-label="区域"><AreaIcon /></PaletteButton>
                        </Palette>
                        <Model>
                            <Breadcrumb><ModelIcon framed />carAbs1_1</Breadcrumb>
                            <Canvas><BrakeModel /></Canvas>
                        </Model>
                    </Workspace>
                </Window>
            </Screen>
        </>
    );
};

export default App;
